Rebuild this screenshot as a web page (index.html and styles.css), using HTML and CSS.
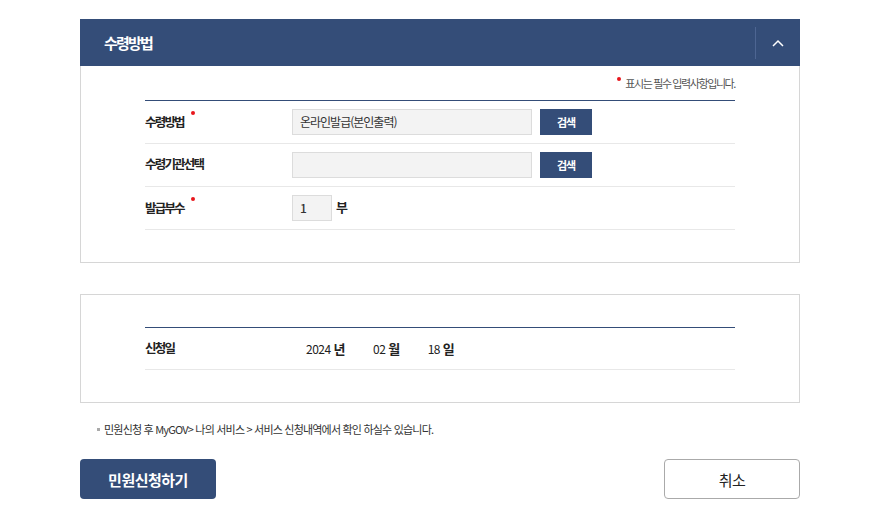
FILE: index.html
```html
<!DOCTYPE html>
<html lang="ko">
<head>
<meta charset="utf-8">
<link rel="stylesheet" href="styles.css">
</head>
<body>
<div class="wrap">
  <section class="panel">
    <div class="panel-head">
      <h2 class="panel-title">수령방법</h2>
      <button class="toggle" type="button" aria-label="접기">
        <svg width="12" height="8" viewBox="0 0 12 8"><polyline points="1,7 6,2 11,7" fill="none" stroke="#fff" stroke-width="1.5"/></svg>
      </button>
    </div>
    <div class="panel-body">
      <p class="req-note"><span class="dot dot-note"></span>표시는 필수 입력사항입니다.</p>
      <div class="form-table">
        <div class="row">
          <div class="label">수령방법<span class="dot dot-label"></span></div>
          <div class="field">
            <div class="input">온라인발급(본인출력)</div>
            <button class="btn-search" type="button">검색</button>
          </div>
        </div>
        <div class="row">
          <div class="label">수령기관선택</div>
          <div class="field">
            <div class="input"></div>
            <button class="btn-search" type="button">검색</button>
          </div>
        </div>
        <div class="row">
          <div class="label">발급부수<span class="dot dot-label"></span></div>
          <div class="field">
            <div class="input input-small">1</div>
            <span class="unit">부</span>
          </div>
        </div>
      </div>
    </div>
  </section>

  <section class="panel panel-plain">
    <div class="panel-body panel-body-date">
      <div class="form-table">
        <div class="row row-date">
          <div class="label">신청일</div>
          <div class="field date">
            <span class="date-part">2024 <b>년</b></span>
            <span class="date-part">02 <b>월</b></span>
            <span class="date-part">18 <b>일</b></span>
          </div>
        </div>
      </div>
    </div>
  </section>

  <p class="info">민원신청 후 MyGOV&gt; 나의 서비스 &gt; 서비스 신청내역에서 확인 하실수 있습니다.</p>

  <div class="actions">
    <button class="btn btn-primary" type="button">민원신청하기</button>
    <button class="btn btn-cancel" type="button">취소</button>
  </div>
</div>
</body>
</html>
```

FILE: styles.css
```css
* { box-sizing: border-box; }
html, body { margin: 0; padding: 0; background: #fff; }
body {
  font-family: "Noto Sans CJK KR", "Noto Sans", "Liberation Sans", sans-serif;
  color: #222;
}
button { font-family: inherit; cursor: pointer; }

.wrap {
  width: 720px;
  margin-left: 80px;
  padding-top: 19px;
}

.panel-head {
  height: 47px;
  background: #344d78;
  display: flex;
  align-items: center;
  padding-left: 24px;
}
.panel-title {
  flex: 1;
  margin: 0;
  color: #fff;
  font-size: 15px;
  font-weight: 700;
  letter-spacing: -1.8px;
}
.toggle {
  width: 45px;
  height: 32px;
  border: 0;
  border-left: 1px solid #4d6592;
  background: transparent;
  display: flex;
  align-items: center;
  justify-content: center;
  padding: 0;
}

.panel-body {
  border: 1px solid #d6d6d6;
  border-top: 0;
  padding: 8px 64px 32px;
}
.panel-plain .panel-body { border-top: 1px solid #d6d6d6; }
.panel-plain { margin-top: 31px; }
.panel-body-date { padding-top: 32px; padding-bottom: 32px; }

.req-note {
  margin: 0 0 8px;
  height: 18px;
  line-height: 18px;
  text-align: right;
  font-size: 11px;
  letter-spacing: -1.4px;
  color: #555;
}
.dot {
  display: inline-block;
  width: 4px;
  height: 4px;
  border-radius: 50%;
  background: #e8161c;
}
.dot-note { margin-right: 4px; vertical-align: 7px; }
.dot-label { margin-left: 7px; vertical-align: 12px; }

.form-table { border-top: 1px solid #344d78; }
.row {
  display: flex;
  align-items: center;
  height: 43px;
  border-bottom: 1px solid #e8e8e8;
}
.row-date { height: 42px; }
.label {
  width: 147px;
  font-size: 12.5px;
  font-weight: 700;
  letter-spacing: -1.8px;
  color: #222;
  padding-bottom: 3px;
}
.field {
  display: flex;
  align-items: center;
}
.input {
  width: 240px;
  height: 26px;
  border: 1px solid #dcdcdc;
  background: #f3f3f3;
  padding-left: 7px;
  font-size: 12px;
  line-height: 24px;
  letter-spacing: -1px;
  color: #333;
}
.input-small { width: 40px; font-weight: 500; letter-spacing: 0; }
.btn-search {
  width: 52px;
  height: 26px;
  margin-left: 8px;
  border: 0;
  background: #344d78;
  color: #fff;
  font-size: 11px;
  font-weight: 700;
  letter-spacing: -1px;
  padding: 0;
}
.unit {
  margin-left: 4px;
  font-size: 13px;
  font-weight: 700;
  margin-top: -3px;
}

.date { padding-left: 14px; font-size: 12px; color: #222; }
.date-part { margin-right: 28px; letter-spacing: -0.5px; }
.date-part b { font-weight: 700; font-size: 13px; }

.info {
  margin: 17px 0 0;
  padding-left: 24px;
  height: 18px;
  line-height: 18px;
  font-size: 11px;
  letter-spacing: -0.8px;
  color: #333;
  display: flex;
  align-items: center;
}
.info::before {
  content: "";
  width: 3px;
  height: 3px;
  background: #aaa;
  margin-left: -7px;
  margin-right: 4px;
}

.actions {
  display: flex;
  justify-content: space-between;
  margin-top: 21px;
}
.btn {
  width: 136px;
  height: 40px;
  border-radius: 4px;
  font-size: 15px;
  letter-spacing: -0.5px;
}
.btn-primary {
  background: #344d78;
  border: 0;
  color: #fff;
  font-weight: 700;
}
.btn-cancel {
  background: #fff;
  border: 1px solid #aaa;
  color: #222;
  font-weight: 400;
}
```
